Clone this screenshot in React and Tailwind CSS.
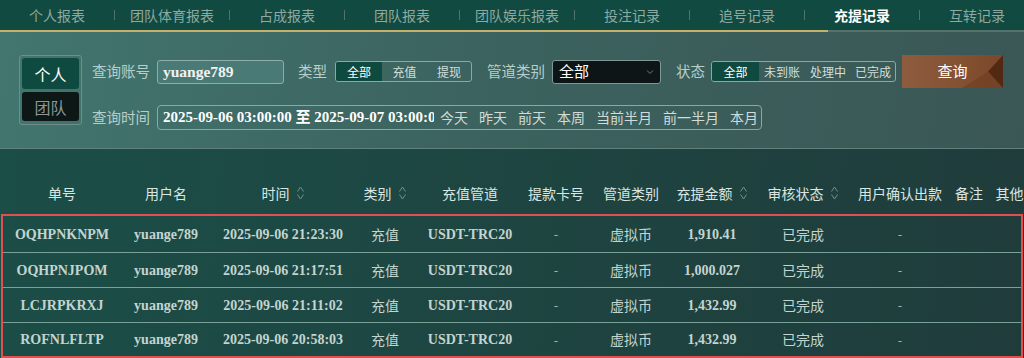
import React from "react";

const CJK = "font-['Noto_Sans_CJK_SC','Noto_Sans',sans-serif]";
const SERIF = "font-['Liberation_Serif','Noto_Sans_CJK_SC',serif]";

const tabs = ["个人报表", "团队体育报表", "占成报表", "团队报表", "团队娱乐报表", "投注记录", "追号记录", "充提记录", "互转记录"];

function SortIcon() {
  return (
    <svg width="9" height="16" viewBox="0 0 9 16" className="ml-[6px]">
      <path d="M1.5 6.5 L4.5 2 L7.5 6.5" fill="none" stroke="#6f928c" strokeWidth="1" />
      <path d="M1.5 9.5 L4.5 14 L7.5 9.5" fill="none" stroke="#6f928c" strokeWidth="1" />
    </svg>
  );
}

const cols = "grid grid-cols-[118px_90px_144px_60px_110px_62px_88px_74px_108px_86px_52px_1fr]";

const headers = [
  ["单号", false],
  ["用户名", false],
  ["时间", true],
  ["类别", true],
  ["充值管道", false],
  ["提款卡号", false],
  ["管道类别", false],
  ["充提金额", true],
  ["审核状态", true],
  ["用户确认出款", false],
  ["备注", false],
  ["其他", false],
];

const rows = [
  ["OQHPNKNPM", "2025-09-06 21:23:30", "1,910.41", "h-[37px]"],
  ["OQHPNJPOM", "2025-09-06 21:17:51", "1,000.027", "h-[35px]"],
  ["LCJRPKRXJ", "2025-09-06 21:11:02", "1,432.99", "h-[35px]"],
  ["ROFNLFLTP", "2025-09-06 20:58:03", "1,432.99", "h-[33px]"],
];

function Seg({ items, widths }) {
  return (
    <div className="flex h-[21px] border border-[#8ca7a4] rounded-[3px] overflow-hidden">
      {items.map((t, i) => (
        <div
          key={t}
          style={{ width: widths[i] }}
          className={`flex items-center justify-center text-[12px] ${CJK} ${i === 0 ? "bg-[#0f4a40] text-white" : "text-[#d3dfdc]"}`}
        >
          {t}
        </div>
      ))}
    </div>
  );
}

const num = `text-center ${SERIF} font-bold text-[14px] whitespace-nowrap`;

export default function App() {
  return (
    <div className={`w-[1024px] h-[358px] overflow-hidden bg-[#1d4843] ${CJK}`}>
      {/* tabs */}
      <div className="flex h-[30px] bg-[#114a40] overflow-hidden items-center">
        {tabs.map((t, i) => (
          <React.Fragment key={t}>
            <div
              className={`w-[114px] shrink-0 flex items-center justify-center text-[14px] ${i === 7 ? "text-white font-bold" : "text-[#8fa9a2]"}`}
            >
              {t}
            </div>
            {i < tabs.length - 1 && <div className="w-px h-[10px] shrink-0 bg-[#4f7469]" />}
          </React.Fragment>
        ))}
      </div>
      <div className="flex h-[2px]">
        <div className="w-[828px] bg-[#c6b06c]" />
        <div className="flex-1 bg-[#56716c]" />
      </div>

      {/* filters */}
      <div className="h-[116px] flex pl-[19px] pt-[23px] bg-[linear-gradient(100deg,#42766f_0%,#3c635f_45%,#3a5755_100%)]">
        <div className="w-[63px] h-[70px] border border-[#6d8e8a] rounded-[3px] p-[2px] flex flex-col gap-[3px]">
          <div className="h-[31px] rounded-[3px] bg-[#0f4a40] text-white text-[16px] flex items-center justify-center">个人</div>
          <div className="h-[29px] rounded-[3px] bg-[#0c1716] text-[#8b9896] text-[16px] flex items-center justify-center">团队</div>
        </div>
        <div className="ml-[10px] flex flex-col">
          <div className="flex items-center h-[33px]">
            <span className="text-[14.5px] text-[#b8cecb] leading-none">查询账号</span>
            <div className="ml-[7px] w-[127px] h-[24px] border border-[#8fabaa] rounded-[3px] bg-[#4a7a76] flex items-center pl-[5px]">
              <span className={`${SERIF} font-bold text-[15.5px] text-[#f2f2f2]`}>yuange789</span>
            </div>
            <span className="ml-[14px] text-[14.5px] text-[#b8cecb] leading-none">类型</span>
            <div className="ml-[8px]">
              <Seg items={["全部", "充值", "提现"]} widths={[46, 45, 44]} />
            </div>
            <span className="ml-[15px] text-[14.5px] text-[#b8cecb] leading-none">管道类别</span>
            <div className="ml-[7px] w-[109px] h-[24px] bg-[#0d1517] border border-[#7d9896] rounded-[3px] flex items-center justify-between pl-[6px] pr-[6px]">
              <span className="text-[15px] text-white">全部</span>
              <svg width="8" height="6" viewBox="0 0 8 6">
                <path d="M1 1.5 L4 4.5 L7 1.5" fill="none" stroke="#6c7c7c" strokeWidth="1" />
              </svg>
            </div>
            <span className="ml-[15px] text-[14.5px] text-[#b8cecb] leading-none">状态</span>
            <div className="ml-[6px]">
              <Seg items={["全部", "未到账", "处理中", "已完成"]} widths={[47, 46, 46, 44]} />
            </div>
            <div className="ml-[6px] relative w-[101px] h-[33px] bg-[linear-gradient(90deg,#8e5c3e,#7c4829)] flex items-center justify-center overflow-hidden">
              <svg className="absolute inset-0" width="101" height="33" viewBox="0 0 101 33">
                <polygon points="60,33 86,16.5 101,33" fill="#6e3c20" opacity="0.55" />
                <polygon points="86,16.5 101,0 101,33" fill="#4a240f" opacity="0.85" />
              </svg>
              <span className="relative text-[15px] text-white">查询</span>
            </div>
          </div>
          <div className="flex items-center mt-[17px]">
            <span className="text-[14.5px] text-[#b8cecb] leading-none">查询时间</span>
            <div className="ml-[7px] w-[605px] h-[25px] border border-[#8ca7a4] rounded-[4px] flex items-center">
              <div className={`w-[276px] overflow-hidden whitespace-nowrap pl-[5px] ${SERIF} font-bold text-[15px] text-white`}>
                2025-09-06 03:00:00 至 2025-09-07 03:00:00
              </div>
              <div className="ml-[6px] flex gap-[11px] text-[14px] text-[#d0dcd9]">
                {["今天", "昨天", "前天", "本周", "当前半月", "前一半月", "本月"].map((t) => (
                  <span key={t}>{t}</span>
                ))}
              </div>
            </div>
          </div>
        </div>
      </div>
      <div className="h-px bg-[#5f807b]" />

      {/* table */}
      <div className="pt-[25px] bg-[linear-gradient(95deg,#1b4e47_0%,#1e4541_50%,#1f3c3b_100%)] h-[220px]">
        <div className={`${cols} h-[38px] ml-[3px] items-center`}>
          {headers.map(([t, s]) => (
            <div key={t} className="flex items-center justify-center text-[14px] text-[#dbe5e2] whitespace-nowrap">
              {t}
              {s && <SortIcon />}
            </div>
          ))}
        </div>
        <div className="mt-[2px] ml-[1px] w-[1022px] border-2 border-[#e1504f]">
          {rows.map((r, i) => (
            <div
              key={r[0]}
              className={`${cols} items-center ${r[3]} ${i < rows.length - 1 ? "border-b border-[#7aa09a]" : ""} text-[#c4d4d0]`}
            >
              <div className={num}>{r[0]}</div>
              <div className={num}>yuange789</div>
              <div className={num}>{r[1]}</div>
              <div className="text-center text-[14px]">充值</div>
              <div className={num}>USDT-TRC20</div>
              <div className="text-center text-[13px] text-[#9fb5b1]">-</div>
              <div className="text-center text-[14px]">虚拟币</div>
              <div className={num}>{r[2]}</div>
              <div className="text-center text-[14px]">已完成</div>
              <div className="text-center text-[13px] text-[#9fb5b1]">-</div>
              <div />
              <div />
            </div>
          ))}
        </div>
      </div>
    </div>
  );
}
